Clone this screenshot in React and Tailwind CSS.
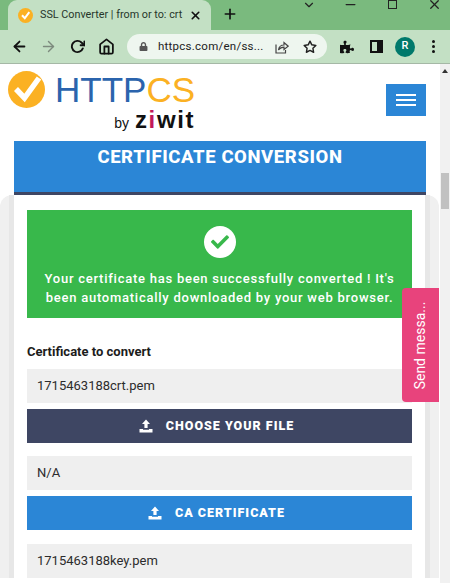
import { FaPuzzlePiece, FaCheck, FaLock } from "react-icons/fa";
import { FiArrowLeft, FiArrowRight, FiRotateCw, FiHome, FiStar, FiX, FiPlus, FiChevronDown, FiMinus } from "react-icons/fi";

const UploadIcon = () => (
  <svg width="14" height="14" viewBox="0 0 14 14" fill="white">
    <path d="M7 0.5 L11 5 H8.6 V9 H5.4 V5 H3 Z" />
    <path d="M0.5 10 H4 V10.8 H10 V10 H13.5 V13.5 H0.5 Z" />
  </svg>
);

const LogoCheck = () => (
  <svg width="37" height="37" viewBox="0 0 37 37">
    <circle cx="18.5" cy="18.5" r="18.5" fill="#fbb123" />
    <path d="M8 18 L16.5 27 L31 7" fill="none" stroke="white" strokeWidth="5.5" />
  </svg>
);

const ShareIcon = () => (
  <svg width="14" height="14" viewBox="0 0 14 14" fill="none" stroke="#444" strokeWidth="1.2">
    <path d="M1 4.5 V13 H10.5 V10" />
    <path d="M3.5 10 C4 6.5 6.5 5 9 5 V2.5 L13.2 6.2 L9 9.5 V7.2 C7 7.2 5 8 3.5 10 Z" />
  </svg>
);

const Field = ({ children, className }) => (
  <div className={`h-[34px] bg-[#efefef] flex items-center pl-[10px] text-[13px] text-[#2c2c2c] ${className}`}>
    {children}
  </div>
);

const UploadButton = ({ label, className }) => (
  <div className={`h-[34px] flex items-center justify-center gap-[13px] pr-[6px] text-white text-[12.5px] font-black tracking-[1px] ${className}`}>
    <UploadIcon />
    <span>{label}</span>
  </div>
);

const App = () => {
  return (
    <div className="relative w-[450px] h-[583px] overflow-hidden bg-white font-['Roboto',sans-serif]">
      {/* tab strip */}
      <div className="h-[30px] bg-[#7aba7e] flex items-end pl-[8px]">
        <div className="w-[203px] h-[30px] bg-[#c3e0c4] rounded-t-[9px] flex items-center pl-[10px] pr-[9px]">
          <svg width="15" height="15" viewBox="0 0 15 15" className="shrink-0">
            <circle cx="7.5" cy="7.5" r="7.5" fill="#fbb123" />
            <path d="M4 7.2 L6.8 10.2 L11.3 4.2" fill="none" stroke="white" strokeWidth="2" />
          </svg>
          <span className="ml-[7px] whitespace-nowrap text-[10.8px] text-[#26362a]">
            SSL Converter | from or to: crt
          </span>
          <FiX className="ml-auto text-[#111]" size={13} strokeWidth={3} />
        </div>
        <FiPlus className="ml-[11px] mb-[8px] text-[#111]" size={16} strokeWidth={2.5} />
        <div className="ml-auto mb-[18px] flex items-center pr-[8px] text-[#222]">
          <FiChevronDown size={14} />
          <FiMinus size={15} className="ml-[27px]" />
          <div className="ml-[30px] w-[9px] h-[9px] border border-[#222]" />
          <FiX size={15} className="ml-[30px]" />
        </div>
      </div>

      {/* toolbar */}
      <div className="h-[34px] bg-[#c3e0c4] border-b border-[#a5b8a6] flex items-center pl-[11px]">
        <FiArrowLeft size={17} strokeWidth={2.5} className="text-[#111]" />
        <FiArrowRight size={17} strokeWidth={2} className="ml-[12px] text-[#7d8a7e]" />
        <FiRotateCw size={15} strokeWidth={3} className="ml-[13px] text-[#111]" />
        <FiHome size={17} strokeWidth={2.5} className="ml-[13px] text-[#111]" />
        <div className="ml-[12px] w-[200px] h-[25px] rounded-full bg-[#eef6ef] flex items-center pl-[12px] pr-[10px]">
          <FaLock size={9} className="text-[#555]" />
          <span className="ml-[10px] text-[11.5px] tracking-[0.25px] text-[#222]">httpcs.com/en/ss...</span>
          <div className="ml-auto"><ShareIcon /></div>
          <FiStar size={14} strokeWidth={2.5} className="ml-[14px] text-[#222]" />
        </div>
        <FaPuzzlePiece size={14} className="ml-[13px] text-[#111]" />
        <div className="ml-[16px] w-[13px] h-[13px] border-2 border-[#111] flex justify-end">
          <div className="w-[4px] bg-[#111]" />
        </div>
        <div className="ml-[12px] w-[20px] h-[20px] rounded-full bg-[#00796b] text-white text-[11px] font-medium flex items-center justify-center">R</div>
        <div className="ml-[17px] flex flex-col gap-[2px]">
          <span className="w-[3px] h-[3px] rounded-full bg-[#111]" />
          <span className="w-[3px] h-[3px] rounded-full bg-[#111]" />
          <span className="w-[3px] h-[3px] rounded-full bg-[#111]" />
        </div>
      </div>

      <div className="flex">
        <div className="w-[440px]">
          {/* site header */}
          <div className="h-[77px] flex justify-between pl-[8px] pr-[14px]">
            <div className="flex items-start pt-[7px]">
              <LogoCheck />
              <div className="ml-[10px] flex flex-col items-end">
                <div className="text-[35px] leading-[38px] font-['Liberation_Sans',sans-serif] text-[#2b64ad]">
                  HTTP<span className="text-[#fbb123]">CS</span>
                </div>
                <div className="flex items-baseline gap-[6px] text-[#111] leading-[22px]">
                  <span className="text-[14px] font-['Liberation_Sans',sans-serif]">by</span>
                  <span className="text-[24px] font-bold tracking-[1.6px] font-['Liberation_Sans',sans-serif]">
                    z<span className="text-[#c2185b]">i</span>wit
                  </span>
                </div>
              </div>
            </div>
            <div className="mt-[20px] w-[40px] h-[32px] bg-[#2b86d6] flex flex-col items-center justify-center gap-[3px]">
              <span className="w-[20px] h-[2px] bg-white" />
              <span className="w-[20px] h-[2px] bg-white" />
              <span className="w-[20px] h-[2px] bg-white" />
            </div>
          </div>

          {/* banner */}
          <div className="mx-[14px] h-[54px] bg-[#2b86d6] border-b-[3px] border-[#3e4663] pt-[3px] text-center text-white text-[18.5px] font-extrabold tracking-[0.6px]">
            CERTIFICATE CONVERSION
          </div>

          {/* form card */}
          <div className="bg-[#f0f0f0] pl-[9px] pr-[9px] mr-[1px] rounded-tl-[12px] rounded-tr-[12px]">
            <div className="border-x-[5px] border-[#e7e7e7]">
              <div className="bg-white px-[13px] pt-[15px]">
                <div className="h-[108px] bg-[#38b84b] flex flex-col items-center pt-[16px] text-white">
                  <div className="w-[32px] h-[32px] rounded-full bg-white flex items-center justify-center">
                    <FaCheck size={18} className="text-[#38b84b]" />
                  </div>
                  <div className="mt-[11px] text-center text-[13px] leading-[19px] font-medium tracking-[0.75px] whitespace-nowrap">
                    Your certificate has been successfully converted ! It's
                    <br />
                    been automatically downloaded by your web browser.
                  </div>
                </div>
                <div className="mt-[26px] text-[13px] leading-[16px] font-bold text-[#1c1c1c]">Certificate to convert</div>
                <Field className="mt-[9px]">1715463188crt.pem</Field>
                <UploadButton label="CHOOSE YOUR FILE" className="mt-[6px] bg-[#3e4663]" />
                <Field className="mt-[13px]">N/A</Field>
                <UploadButton label="CA CERTIFICATE" className="mt-[6px] bg-[#2b86d6]" />
                <Field className="mt-[14px]">1715463188key.pem</Field>
              </div>
            </div>
          </div>
        </div>

        {/* scrollbar */}
        <div className="w-[10px] h-[519px] bg-[#f1f1f1] flex flex-col items-center">
          <div className="mt-[5px] w-0 h-0 border-x-[3px] border-x-transparent border-b-[4px] border-b-[#333]" />
          <div className="mt-[100px] w-[8px] h-[36px] bg-[#c1c1c1]" />
        </div>
      </div>

      {/* send message tab */}
      <div className="absolute left-[402px] top-[288px] w-[37px] h-[114px] bg-[#e8437c] rounded-l-[4px] flex items-center justify-center">
        <span className="-rotate-90 whitespace-nowrap text-white text-[14px]">Send messa...</span>
      </div>
    </div>
  );
};

export default App;
